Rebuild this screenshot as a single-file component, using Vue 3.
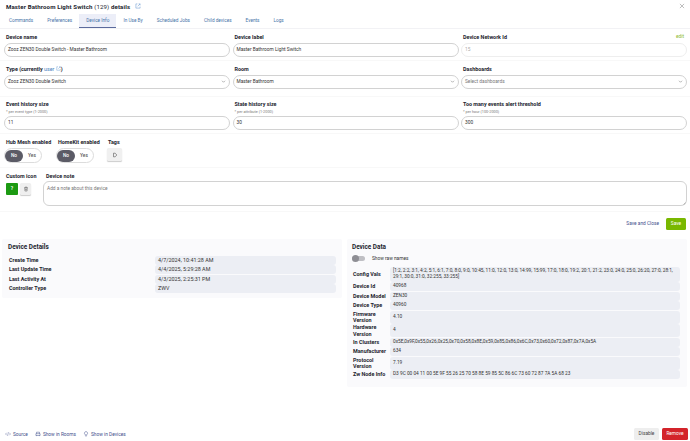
<script setup>
const tabs = ['Commands', 'Preferences', 'Device Info', 'In Use By', 'Scheduled Jobs', 'Child devices', 'Events', 'Logs']

const details = [
  { label: 'Create Time', value: '4/7/2024, 10:41:28 AM' },
  { label: 'Last Update Time', value: '4/4/2025, 5:29:28 AM' },
  { label: 'Last Activity At', value: '4/3/2025, 2:25:31 PM' },
  { label: 'Controller Type', value: 'ZWV' },
]

const deviceData = [
  { label: 'Config Vals', value: '[1:2, 2:2, 3:1, 4:2, 5:1, 6:1, 7:0, 8:0, 9:0, 10:45, 11:0, 12:0, 13:0, 14:99, 15:99, 17:0, 18:0, 19:2, 20:1, 21:2, 23:0, 24:0, 25:0, 26:20, 27:0, 28:1, 29:1, 30:0, 31:0, 32:255, 33:255]' },
  { label: 'Device Id', value: '40968' },
  { label: 'Device Model', value: 'ZEN30' },
  { label: 'Device Type', value: '40960' },
  { label: 'Firmware Version', value: '4.10' },
  { label: 'Hardware Version', value: '4' },
  { label: 'In Clusters', value: '0x5E,0x9F,0x55,0x26,0x25,0x70,0x58,0x8E,0x59,0x85,0x86,0x6C,0x73,0x60,0x72,0x87,0x7A,0x5A' },
  { label: 'Manufacturer', value: '634' },
  { label: 'Protocol Version', value: '7.19' },
  { label: 'Zw Node Info', value: 'D3 9C 00 04 11 00 5E 9F 55 26 25 70 58 8E 59 85 5C 86 6C 73 60 72 87 7A 5A 68 23' },
]
</script>

<template>
  <div class="page">
    <header class="title-row">
      <h1>Master Bathroom Light Switch <span class="thin">(129)</span> details</h1>
      <svg class="ext" viewBox="0 0 10 10"><path d="M4 1.5H1.5v7h7V6M6 1.5h2.5V4M8.5 1.5 4.5 5.5" /></svg>
      <svg class="close" viewBox="0 0 10 10"><path d="M1.5 1.5l7 7M8.5 1.5l-7 7" /></svg>
    </header>

    <nav class="tabs">
      <span v-for="tab in tabs" :key="tab" class="tab" :class="{ active: tab === 'Device Info' }">{{ tab }}</span>
    </nav>

    <section class="form-row three row-one">
      <div class="field">
        <label>Device name</label>
        <div class="input">Zooz ZEN30 Double Switch - Master Bathroom</div>
      </div>
      <div class="field">
        <label>Device label</label>
        <div class="input">Master Bathroom Light Switch</div>
      </div>
      <div class="field">
        <label class="split">Device Network Id <span class="edit">edit</span></label>
        <div class="input disabled">15</div>
      </div>
    </section>

    <section class="form-row three row-two">
      <div class="field">
        <label>Type (currently <span class="link">user</span> <svg class="ext small" viewBox="0 0 10 10"><path d="M4 1.5H1.5v7h7V6M6 1.5h2.5V4M8.5 1.5 4.5 5.5" /></svg>)</label>
        <div class="input select">Zooz ZEN30 Double Switch<svg viewBox="0 0 10 10"><path d="M2 3.5 5 6.5 8 3.5" /></svg></div>
      </div>
      <div class="field">
        <label>Room</label>
        <div class="input select">Master Bathroom<svg viewBox="0 0 10 10"><path d="M2 3.5 5 6.5 8 3.5" /></svg></div>
      </div>
      <div class="field">
        <label>Dashboards</label>
        <div class="input select muted">Select dashboards<svg viewBox="0 0 10 10"><path d="M2 3.5 5 6.5 8 3.5" /></svg></div>
      </div>
    </section>

    <section class="form-row three row-three">
      <div class="field">
        <label>Event history size</label>
        <small>* per event type (1-2000)</small>
        <div class="input">11</div>
      </div>
      <div class="field">
        <label>State history size</label>
        <small>* per attribute (1-2000)</small>
        <div class="input">30</div>
      </div>
      <div class="field">
        <label>Too many events alert threshold</label>
        <small>* per hour (100-2000)</small>
        <div class="input">300</div>
      </div>
    </section>

    <section class="form-row toggles">
      <div class="field">
        <label>Hub Mesh enabled</label>
        <div class="yes-no"><span class="on">No</span><span>Yes</span></div>
      </div>
      <div class="field">
        <label>HomeKit enabled</label>
        <div class="yes-no"><span class="on">No</span><span>Yes</span></div>
      </div>
      <div class="field">
        <label class="tags-label">Tags</label>
        <div class="tag-btn">
          <svg viewBox="0 0 10 10"><path d="M2.5 2h2.8L8 5 5.3 8H2.5z" /></svg>
        </div>
      </div>
    </section>

    <section class="form-row note-row">
      <div class="field icon-field">
        <label>Custom icon</label>
        <div class="icon-btns">
          <span class="green-icon">?</span>
          <span class="trash">
            <svg viewBox="0 0 10 10"><path d="M2 2.800h6M4 2.800V1.600h2v1.200M2.800 2.800l.4 5.600h3.600l.4-5.600M4.400 4.500v2.500M5.600 4.500v2.500" /></svg>
          </span>
        </div>
      </div>
      <div class="field note-field">
        <label>Device note</label>
        <div class="textarea">
          Add a note about this device
          <svg class="grip" viewBox="0 0 4 4"><path d="M0.500 3.500 3.500 0.500M2 3.500 3.500 2" /></svg>
        </div>
      </div>
    </section>

    <div class="save-row">
      <span class="save-close">Save and Close</span>
      <span class="save">Save</span>
    </div>

    <div class="panels">
      <section class="panel details-panel">
        <h2>Device Details</h2>
        <div v-for="row in details" :key="row.label" class="detail-row">
          <strong>{{ row.label }}</strong>
          <span class="pill">{{ row.value }}</span>
        </div>
      </section>

      <section class="panel data-panel">
        <h2>Device Data</h2>
        <div class="raw-toggle">
          <span class="switch"><i></i></span>
          <span>Show raw names</span>
        </div>
        <div v-for="row in deviceData" :key="row.label" class="data-row">
          <strong>{{ row.label }}</strong>
          <span class="pill">{{ row.value }}</span>
        </div>
      </section>
    </div>

    <footer class="footer">
      <div class="links">
        <span>
          <svg viewBox="0 0 12 10"><path d="M3.500 2.500 1 5l2.500 2.500M8.500 2.500 11 5 8.500 7.500M7 1.500 5 8.500" /></svg>
          Source
        </span>
        <span>
          <svg viewBox="0 0 10 10"><path d="M2.500 4.500V2h5v2.500M1.500 4.500h7v3h-7zM2.500 7.500v1M7.500 7.500v1" /></svg>
          Show in Rooms
        </span>
        <span>
          <svg viewBox="0 0 10 10"><path d="M5 1a2.700 2.700 0 0 0-1.500 4.900V7h3V5.900A2.700 2.700 0 0 0 5 1zM4 8.500h2" /></svg>
          Show in Devices
        </span>
      </div>
      <div class="actions">
        <span class="disable">Disable</span>
        <span class="remove">Remove</span>
      </div>
    </footer>
  </div>
</template>

<style>
html,
body {
  margin: 0;
  background: #fff;
}
</style>

<style scoped>
.page {
  width: 690px;
  height: 441px;
  box-sizing: border-box;
  display: flex;
  flex-direction: column;
  overflow: hidden;
  font-family: Roboto, "Liberation Sans", sans-serif;
  font-size: 4.800px;
  color: #333;
  background: #fff;
}

.title-row {
  height: 14px;
  display: flex;
  align-items: center;
  padding: 0 5px 2px 6px;
  box-sizing: border-box;
}

h1 {
  margin: 0;
  font-size: 6.100px;
  font-weight: 700;
  color: #22242e;
  letter-spacing: 0.02em;
}

.thin {
  font-weight: 400;
}

.ext {
  width: 6px;
  height: 6px;
  margin-left: 5px;
  fill: none;
  stroke: #6a9bd0;
  stroke-width: 0.9;
}

.ext.small {
  width: 5px;
  height: 5px;
  margin-left: 0;
}

.close {
  width: 6px;
  height: 6px;
  margin-left: auto;
  fill: none;
  stroke: #777;
  stroke-width: 0.8;
}

.tabs {
  display: flex;
  height: 14px;
  padding-left: 2px;
  border-bottom: 1px solid #f2f2f5;
}

.tab {
  padding: 0 7px;
  line-height: 14px;
  font-size: 4.700px;
  color: #4673a8;
  white-space: nowrap;
}

.tab.active {
  background: #eceef8;
  box-shadow: inset 0 -1px 0 #5b6a9c;
}

.form-row {
  display: grid;
  padding: 0 3px 0 4px;
  border-bottom: 1px solid #f8f8f8;
  box-sizing: border-box;
}

.three {
  grid-template-columns: 226px 226px 226px;
  column-gap: 2.500px;
}

.row-one {
  height: 32px;
  padding-top: 4px;
}

.row-two {
  height: 36px;
  padding-top: 4px;
}

.row-three {
  height: 37px;
  padding-top: 3px;
}

.field {
  display: flex;
  flex-direction: column;
  min-width: 0;
}

label {
  font-size: 5.400px;
  font-weight: 700;
  line-height: 8px;
  color: #22242e;
  padding-left: 2px;
  margin-bottom: 2px;
  white-space: nowrap;
}

.split {
  display: flex;
  justify-content: space-between;
  padding-right: 3px;
}

.edit {
  color: #8bb82e;
  font-weight: 400;
  font-size: 4.800px;
}

.link {
  color: #4a7fc0;
  font-weight: 400;
}

small {
  font-size: 3.800px;
  color: #777;
  padding-left: 2px;
  line-height: 5px;
  margin: -1px 0 2px;
}

.input {
  height: 13.500px;
  box-sizing: border-box;
  border: 1px solid #d2d2d2;
  border-radius: 7px;
  padding: 0 3px;
  display: flex;
  align-items: center;
  justify-content: space-between;
  color: #333;
  background: #fff;
}

.input.disabled {
  border-color: #eee;
  color: #aaa;
}

.input.muted {
  color: #777;
}

.select svg {
  width: 5px;
  height: 5px;
  fill: none;
  stroke: #666;
  stroke-width: 1;
}

.toggles {
  grid-template-columns: 52px 51px auto;
  justify-content: start;
  padding-top: 4px;
  height: 34px;
}

.yes-no {
  width: 38px;
  height: 15px;
  box-sizing: border-box;
  border: 1px solid #dcdcdc;
  border-radius: 8px;
  display: flex;
  align-items: center;
  font-weight: 500;
  color: #555;
}

.yes-no span {
  flex: 1;
  text-align: center;
  line-height: 12px;
}

.yes-no .on {
  background: #5b5b66;
  color: #fff;
  border-radius: 7px;
  flex: 0 0 18px;
}

.tags-label {
  padding-left: 1px;
}

.tag-btn {
  width: 15px;
  height: 13px;
  background: #f0f0f0;
  border-radius: 1.500px;
  box-shadow: 0 1px 1px #ccc;
  display: flex;
  align-items: center;
  justify-content: center;
}

.tag-btn svg {
  width: 6px;
  height: 6px;
  fill: none;
  stroke: #444;
  stroke-width: 0.9;
}

.note-row {
  display: flex;
  gap: 8px;
  padding-top: 4px;
  height: 44px;
}

.icon-field {
  flex: 0 0 31px;
}

.icon-btns {
  display: flex;
  gap: 2px;
  padding-left: 2px;
  margin-top: 1px;
}

.green-icon {
  width: 12px;
  height: 12px;
  background: #1c9a12;
  color: #fff;
  border-radius: 1px;
  text-align: center;
  line-height: 12px;
  font-weight: 700;
}

.trash {
  width: 11px;
  height: 12px;
  background: #efefef;
  border-radius: 1.500px;
  box-shadow: 0 1px 1px #ccc;
  display: flex;
  align-items: center;
  justify-content: center;
}

.trash svg {
  width: 6px;
  height: 6px;
  fill: none;
  stroke: #555;
  stroke-width: 0.8;
}

.note-field {
  flex: 1;
}

.note-field label {
  padding-left: 3px;
  margin-bottom: 1px;
}

.textarea {
  height: 25px;
  box-sizing: border-box;
  border: 1px solid #d2d2d2;
  border-radius: 6px;
  padding: 4px 3px;
  color: #777;
  position: relative;
}

.grip {
  position: absolute;
  right: 0.500px;
  bottom: 0.500px;
  width: 3px;
  height: 3px;
  fill: none;
  stroke: #777;
  stroke-width: 0.5;
}

.save-row {
  display: flex;
  justify-content: flex-end;
  align-items: flex-start;
  gap: 7px;
  height: 27px;
  padding: 6px 4px 0 0;
  box-sizing: border-box;
}

.save-close {
  color: #3f4f8c;
  line-height: 12px;
}

.save {
  width: 20px;
  height: 12px;
  line-height: 12px;
  text-align: center;
  background: #79b800;
  color: #fff;
  border-radius: 1.500px;
}

.panels {
  display: grid;
  grid-template-columns: 340px 340px;
  column-gap: 5px;
  padding: 0 3px 0 2px;
  align-items: start;
}

.panel {
  background: #fafafc;
  border-radius: 2px;
  box-sizing: border-box;
}

h2 {
  margin: 1px 0 0;
  font-size: 6.400px;
  font-weight: 700;
  line-height: 9px;
  color: #22242e;
}

.details-panel {
  padding: 3px 6px;
  height: 59px;
}

.details-panel h2 {
  margin-bottom: 3.500px;
}

.detail-row {
  display: grid;
  grid-template-columns: 147px 1fr;
  align-items: center;
  margin-bottom: 0.500px;
}

strong {
  font-size: 5.400px;
  font-weight: 700;
  color: #22242e;
  line-height: 6.500px;
  padding-left: 1px;
}

.pill {
  background: #eceef4;
  border-radius: 3px;
  padding: 1px 3px;
  line-height: 6.500px;
  min-height: 9px;
  box-sizing: border-box;
  display: flex;
  align-items: center;
  font-size: 5.400px;
}

.data-panel {
  padding: 3px 7px 7px 5px;
  height: 148px;
}

.raw-toggle {
  display: flex;
  align-items: center;
  gap: 7px;
  height: 11px;
  margin-top: 1px;
  margin-bottom: 2.700px;
}

.switch {
  width: 13px;
  height: 5px;
  background: #bfbfc4;
  border-radius: 3px;
  position: relative;
}

.switch i {
  position: absolute;
  left: 0;
  top: -1px;
  width: 7px;
  height: 7px;
  background: #8e8e94;
  border-radius: 50%;
}

.data-row {
  display: grid;
  grid-template-columns: 38px 290px;
  margin-bottom: 0.500px;
}

.data-row strong {
  display: flex;
  align-items: center;
  padding-right: 2px;
}

.data-row .pill {
  font-size: 4.750px;
}

.footer {
  margin-top: auto;
  display: flex;
  justify-content: space-between;
  align-items: flex-end;
  padding: 0 2px 1px 5px;
}

.links {
  display: flex;
  gap: 7px;
  color: #3f4f8c;
  padding-bottom: 3px;
}

.links span {
  display: flex;
  align-items: center;
  gap: 2px;
}

.links svg {
  width: 6px;
  height: 6px;
  fill: none;
  stroke: #3f4f8c;
  stroke-width: 0.8;
}

.actions {
  display: flex;
  gap: 3px;
}

.actions span {
  height: 12px;
  line-height: 12px;
  text-align: center;
  border-radius: 1.500px;
}

.disable {
  width: 25px;
  background: #eeeeee;
  color: #444;
}

.remove {
  width: 26px;
  background: #d3232a;
  color: #fff;
}
</style>
